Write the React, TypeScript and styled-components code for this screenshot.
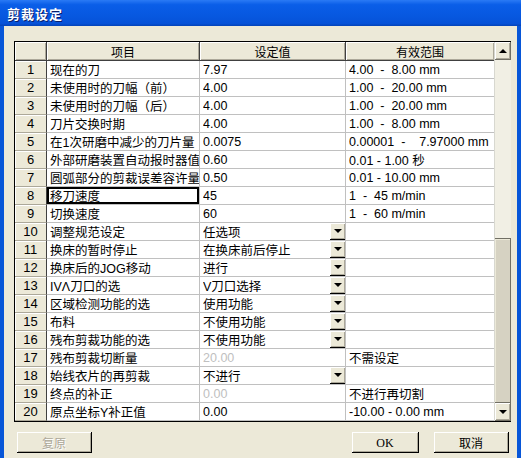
import * as React from "react";
import styled, { createGlobalStyle } from "styled-components";

const GlobalStyle = createGlobalStyle`
  html, body {
    margin: 0;
    padding: 0;
    background: #ece9d8;
  }
  body {
    font-family: "Liberation Sans", "Noto Sans CJK SC", sans-serif;
    font-size: 12px;
    color: #000;
  }
`;

const Window = styled.div`
  width: 521px;
  height: 458px;
  display: flex;
  flex-direction: column;
  overflow: hidden;
  background: #ece9d8;
`;

const TitleBar = styled.header`
  height: 26px;
  flex: 0 0 26px;
  display: flex;
  align-items: center;
  padding-left: 7px;
  background: linear-gradient(
    #2a7af5 0%,
    #0a5ee8 18%,
    #0758e0 60%,
    #0652d8 90%,
    #0443b8 100%
  );
  color: #fff;
  font-weight: bold;
  font-size: 13px;
  font-family: "Noto Sans CJK SC", sans-serif;
  text-shadow: 1px 1px #0a1e6a;
  letter-spacing: 1px;
`;

const Body = styled.main`
  flex: 1 1 0;
  display: flex;
  flex-direction: column;
  border-left: 4px solid #0756d8;
  border-right: 4px solid #0756d8;
  padding: 15px 6px 0 10px;
`;

const GridFrame = styled.section`
  width: 497px;
  height: 381px;
  box-sizing: border-box;
  border: 1px solid #000;
  display: flex;
  background: #fff;
`;

const Grid = styled.div`
  flex: 1 1 0;
  display: flex;
  flex-direction: column;
`;

const Row = styled.div<{ $header?: boolean }>`
  display: grid;
  grid-template-columns: 32px 153px 146px 148px;
  height: ${p => (p.$header ? "19px" : "18px")};
`;

const HeadCell = styled.div`
  box-sizing: border-box;
  background: #ece9d8;
  border-right: 1px solid #404040;
  border-bottom: 1px solid #404040;
  box-shadow: inset 1px 1px #fff, inset -1px -1px #aca899;
  display: flex;
  align-items: center;
  justify-content: center;
  font-family: "Noto Sans CJK SC", sans-serif;
  &:last-child {
    border-right: 0;
  }
`;

const NumCell = styled.div`
  box-sizing: border-box;
  background: #ece9d8;
  border-right: 1px solid #404040;
  border-bottom: 1px solid #aca899;
  box-shadow: inset 1px 1px #fff;
  display: flex;
  align-items: center;
  justify-content: center;
  font-size: 13px;
`;

const Cell = styled.div<{ $focus?: boolean; $muted?: boolean; $last?: boolean }>`
  box-sizing: border-box;
  border-right: ${p => (p.$last ? "0" : "1px solid #c0c0c0")};
  border-bottom: 1px solid #c0c0c0;
  display: flex;
  align-items: center;
  padding-left: 3px;
  white-space: nowrap;
  overflow: hidden;
  font-size: 12.5px;
  color: ${p => (p.$muted ? "#c0c0c0" : "#000")};
  box-shadow: ${p => (p.$focus ? "inset 0 0 0 2px #000" : "none")};
`;

const CellText = styled.span`
  flex: 1 1 0;
  overflow: hidden;
`;

const DropButton = styled.span`
  width: 16px;
  height: 17px;
  flex: 0 0 16px;
  box-sizing: border-box;
  background: #ece9d8;
  border-right: 1px solid #000;
  border-bottom: 1px solid #000;
  box-shadow: inset 1px 1px #fff, inset -1px -1px #aca899;
  display: flex;
  align-items: center;
  justify-content: center;
  margin-right: -1px;
`;

const Arrow = styled.span<{ $up?: boolean }>`
  width: 0;
  height: 0;
  border-left: 4px solid transparent;
  border-right: 4px solid transparent;
  ${p =>
    p.$up ? "border-bottom: 4px solid #000;" : "border-top: 4px solid #000;"}
`;

const ScrollBar = styled.aside`
  width: 16px;
  flex: 0 0 16px;
  display: flex;
  flex-direction: column;
  border-left: 1px solid #d8d8d0;
  box-sizing: content-box;
`;

const ScrollButton = styled.div`
  height: 18px;
  flex: 0 0 18px;
  box-sizing: border-box;
  background: #ece9d8;
  border-right: 1px solid #716f64;
  border-bottom: 1px solid #716f64;
  box-shadow: inset 1px 1px #fff, inset -1px -1px #aca899;
  display: flex;
  align-items: center;
  justify-content: center;
`;

const Track = styled.div`
  flex: 1 1 0;
  display: flex;
  flex-direction: column;
  background: #f1efe4;
`;

const TrackSpace = styled.div<{ $h: number }>`
  flex: 0 0 ${p => p.$h}px;
`;

const Thumb = styled.div`
  flex: 1 1 0;
  box-sizing: border-box;
  background: #d6d2c2;
  border-top: 1px solid #716f64;
  border-right: 1px solid #716f64;
  border-bottom: 1px solid #716f64;
  box-shadow: inset 1px 1px #ece9d8;
`;

const Footer = styled.footer`
  display: flex;
  align-items: center;
  margin-top: 10px;
  padding-left: 3px;
  padding-right: 2px;
`;

const Spacer = styled.div`
  flex: 1 1 0;
`;

const Button = styled.button<{ $w: number }>`
  width: ${p => p.$w}px;
  height: 21px;
  box-sizing: border-box;
  background: #ece9d8;
  border: 0;
  border-right: 1px solid #000;
  border-bottom: 1px solid #000;
  box-shadow: inset 1px 1px #fff, inset -1px -1px #aca899;
  font-family: "Noto Sans CJK SC", sans-serif;
  font-size: 12px;
  color: #000;
  padding: 0;
  & + & {
    margin-left: 15px;
  }
  &:disabled {
    color: #aca899;
    text-shadow: 1px 1px #fff;
  }
`;

const OkLabel = styled.span`
  font-family: "Liberation Serif", serif;
  font-size: 12px;
`;

interface Item {
  name: string;
  value: string;
  range: string;
  drop?: boolean;
  muted?: boolean;
}

const items: Item[] = [
  { name: "现在的刀", value: "7.97", range: "4.00  -  8.00 mm" },
  { name: "未使用时的刀幅（前）", value: "4.00", range: "1.00  -  20.00 mm" },
  { name: "未使用时的刀幅（后）", value: "4.00", range: "1.00  -  20.00 mm" },
  { name: "刀片交换时期", value: "4.00", range: "1.00  -  8.00 mm" },
  { name: "在1次研磨中减少的刀片量", value: "0.0075", range: "0.00001  -    7.97000 mm" },
  { name: "外部研磨装置自动报时器值", value: "0.60", range: "0.01 - 1.00 秒" },
  { name: "圆弧部分的剪裁误差容许量", value: "0.50", range: "0.01 - 10.00 mm" },
  { name: "移刀速度", value: "45", range: "1  -  45 m/min" },
  { name: "切换速度", value: "60", range: "1  -  60 m/min" },
  { name: "调整规范设定", value: "任选项", range: "", drop: true },
  { name: "换床的暂时停止", value: "在换床前后停止", range: "", drop: true },
  { name: "换床后的JOG移动", value: "进行", range: "", drop: true },
  { name: "IVΛ刀口的选", value: "V刀口选择", range: "", drop: true },
  { name: "区域检测功能的选", value: "使用功能", range: "", drop: true },
  { name: "布料", value: "不使用功能", range: "", drop: true },
  { name: "残布剪裁功能的选", value: "不使用功能", range: "", drop: true },
  { name: "残布剪裁切断量", value: "20.00", range: "不需设定", muted: true },
  { name: "始线衣片的再剪裁", value: "不进行", range: "", drop: true },
  { name: "终点的补正", value: "0.00", range: "不进行再切割", muted: true },
  { name: "原点坐标Y补正值", value: "0.00", range: "-10.00 - 0.00 mm" }
];

const FOCUSED = 7;

export default function App() {
  return (
    <>
      <GlobalStyle />
      <Window>
        <TitleBar>剪裁设定</TitleBar>
        <Body>
          <GridFrame>
            <Grid>
              <Row $header>
                <HeadCell />
                <HeadCell>项目</HeadCell>
                <HeadCell>设定值</HeadCell>
                <HeadCell>有效范围</HeadCell>
              </Row>
              {items.map((item, i) => (
                <Row key={i}>
                  <NumCell>{i + 1}</NumCell>
                  <Cell $focus={i === FOCUSED}>{item.name}</Cell>
                  <Cell $muted={item.muted}>
                    <CellText style={{ whiteSpace: "pre" }}>{item.value}</CellText>
                    {item.drop && (
                      <DropButton>
                        <Arrow />
                      </DropButton>
                    )}
                  </Cell>
                  <Cell $last>
                    <CellText style={{ whiteSpace: "pre" }}>{item.range}</CellText>
                  </Cell>
                </Row>
              ))}
            </Grid>
            <ScrollBar>
              <ScrollButton>
                <Arrow $up />
              </ScrollButton>
              <Track>
                <TrackSpace $h={178} />
                <Thumb />
              </Track>
              <ScrollButton>
                <Arrow />
              </ScrollButton>
            </ScrollBar>
          </GridFrame>
          <Footer>
            <Button $w={75} disabled>
              复原
            </Button>
            <Spacer />
            <Button $w={67}>
              <OkLabel>OK</OkLabel>
            </Button>
            <Button $w={75}>取消</Button>
          </Footer>
        </Body>
      </Window>
    </>
  );
}
